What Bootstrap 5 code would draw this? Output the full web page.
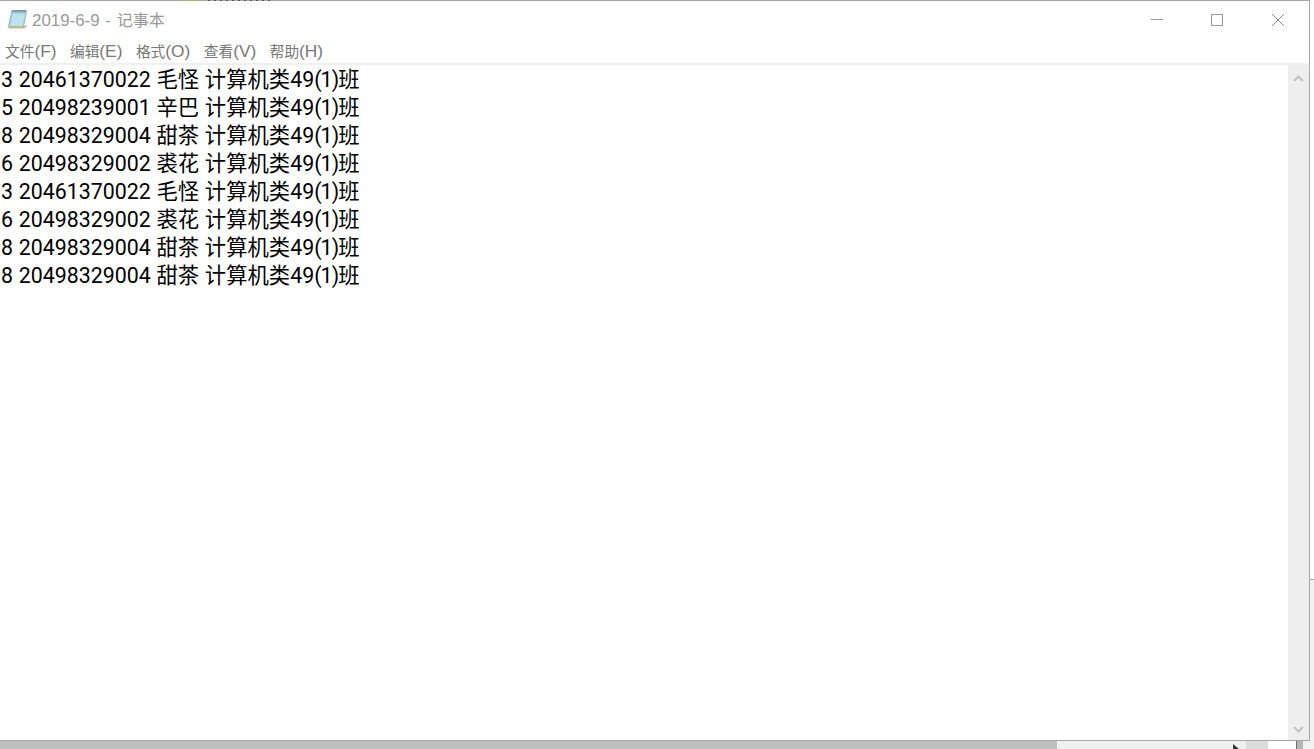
<!DOCTYPE html>
<html lang="zh-CN">
<head>
  <meta charset="UTF-8">
  <title>2019-6-9 - 记事本</title>
  <link href="https://cdn.jsdelivr.net/npm/bootstrap@5.3.0/dist/css/bootstrap.min.css" rel="stylesheet">
  <style>
    html, body { height: 749px; overflow: hidden; background: #fff; }
    .np-page { height: 749px; }
    .np-window { height: 741px; width: 1310px; border: 1px solid #a6a6a6; border-left: 0; background: #fff; }
    .np-title { height: 38px; padding-left: 8px; padding-bottom: 2px; font: 16.9px "Liberation Sans", "Noto Sans CJK SC", sans-serif; word-spacing: 1px; color: #999; }
    .np-title svg { margin-right: 5px; }
    .np-appname { font-size: 16px; }
    .np-winbtns { height: 38px; margin-bottom: -2px; margin-right: 1px; }
    .np-winbtn { width: 60.5px; height: 38px; }
    .np-winbtn svg { margin: 0; }
    .np-menu { height: 26px; padding-left: 5px; padding-bottom: 1px; gap: 13.5px; font: 14.7px "Liberation Sans", "Noto Sans CJK SC", sans-serif; color: #777; border-bottom: 2px solid #f0f0f0; }
    .np-key { font-size: 17.3px; }
    .np-body { min-height: 0; }
    .np-text { font: 21.33px/28px Roboto, "Noto Sans CJK SC", sans-serif; word-spacing: 0.5px; color: #000; padding: 1px 0 0 1px; overflow: hidden; }
    .np-text div { white-space: pre; }
    .np-paren { letter-spacing: -0.9px; }
    .np-scroll { width: 21px; background: #eeeeee; padding: 10px 0 7px; }
    .np-strip { height: 8px; }
    .np-strip-a { width: 1057px; background: #bfbfbf; }
    .np-strip-b { width: 189px; background: #f0f0f0; }
    .np-strip-c { width: 22px; background: #dcdcdc; }
    .np-strip-d { width: 28px; background: #fff; }
    .np-strip-e { width: 1px; background: #6e6e6e; }
    .np-strip-f { width: 6px; background: #b5b5b5; }
    .np-strip-g { width: 11px; background: #f2f2f2; }
    .np-cursor { left: 1233px; top: 744px; }
    .np-edge { width: 4px; height: 162px; background: #f2f2f2; border-top: 1px solid #a6a6a6; left: 1310px; top: 579px; }
    .np-behind { height: 1px; left: 185px; top: 0; width: 12px; background: #c9a860; }
    .np-behind-b { left: 208px; width: 62px; background: repeating-linear-gradient(90deg, #555 0 2px, #a6a6a6 2px 6px); }
  </style>
</head>
<body>
  <div class="np-page position-relative">
    <div class="np-window d-flex flex-column">
      <div class="np-title d-flex align-items-center">
        <svg width="19" height="20" viewBox="0 0 19 20">
          <path d="M4 1.500h14.500l-3 16h-15z" fill="#a8d6e0" stroke="#8fb6c2"/>
          <path d="M5 5h12l-2.500 12h-12z" fill="#bfe3ea"/>
          <path d="M0.500 17.500h15l3-1.500v1.500l-2 2h-16z" fill="#c9bb90"/>
          <path d="M5 1v2.500M7 1v2.500M9 1v2.500M11 1v2.500M13 1v2.500M15 1v2.500M17 1v2.500" stroke="#6c7a80"/>
        </svg>
        <span>2019-6-9 - <span class="np-appname">记事本</span></span>
        <div class="np-winbtns ms-auto d-flex">
          <div class="np-winbtn d-flex align-items-center justify-content-center">
            <svg width="12" height="12" viewBox="0 0 12 12"><path d="M0 5.500h12" stroke="#999"/></svg>
          </div>
          <div class="np-winbtn d-flex align-items-center justify-content-center">
            <svg width="12" height="12" viewBox="0 0 12 12"><rect x="0.500" y="0.500" width="11" height="11" fill="none" stroke="#999"/></svg>
          </div>
          <div class="np-winbtn d-flex align-items-center justify-content-center">
            <svg width="12" height="12" viewBox="0 0 12 12"><path d="M0 0l12 12M12 0l-12 12" stroke="#8c8c8c"/></svg>
          </div>
        </div>
      </div>
      <div class="np-menu d-flex align-items-center">
        <span>文件<span class="np-key">(F)</span></span>
        <span>编辑<span class="np-key">(E)</span></span>
        <span>格式<span class="np-key">(O)</span></span>
        <span>查看<span class="np-key">(V)</span></span>
        <span>帮助<span class="np-key">(H)</span></span>
      </div>
      <div class="np-body d-flex flex-grow-1">
        <div class="np-text flex-grow-1">
          <div>3 20461370022 毛怪 计算机类49<span class="np-paren">(1)</span>班</div>
          <div>5 20498239001 辛巴 计算机类49<span class="np-paren">(1)</span>班</div>
          <div>8 20498329004 甜茶 计算机类49<span class="np-paren">(1)</span>班</div>
          <div>6 20498329002 裘花 计算机类49<span class="np-paren">(1)</span>班</div>
          <div>3 20461370022 毛怪 计算机类49<span class="np-paren">(1)</span>班</div>
          <div>6 20498329002 裘花 计算机类49<span class="np-paren">(1)</span>班</div>
          <div>8 20498329004 甜茶 计算机类49<span class="np-paren">(1)</span>班</div>
          <div>8 20498329004 甜茶 计算机类49<span class="np-paren">(1)</span>班</div>
        </div>
        <div class="np-scroll d-flex flex-column justify-content-between align-items-center">
          <svg width="11" height="7" viewBox="0 0 11 7"><path d="M1 6l4.500-4.500L10 6" fill="none" stroke="#c2c2c2" stroke-width="2"/></svg>
          <svg width="11" height="7" viewBox="0 0 11 7"><path d="M1 1l4.500 4.500L10 1" fill="none" stroke="#c2c2c2" stroke-width="2"/></svg>
        </div>
      </div>
    </div>
    <div class="np-strip d-flex">
      <div class="np-strip-a"></div><div class="np-strip-b"></div><div class="np-strip-c"></div><div class="np-strip-d"></div><div class="np-strip-e"></div><div class="np-strip-f"></div><div class="np-strip-g"></div>
    </div>
    <div class="np-edge position-absolute"></div>
    <div class="np-behind position-absolute"></div>
    <div class="np-behind np-behind-b position-absolute"></div>
    <svg class="np-cursor position-absolute" width="7" height="5" viewBox="0 0 7 5"><path d="M0 0l6 5H0z" fill="#333"/></svg>
  </div>
  <script src="https://cdn.jsdelivr.net/npm/bootstrap@5.3.0/dist/js/bootstrap.bundle.min.js"></script>
</body>
</html>
